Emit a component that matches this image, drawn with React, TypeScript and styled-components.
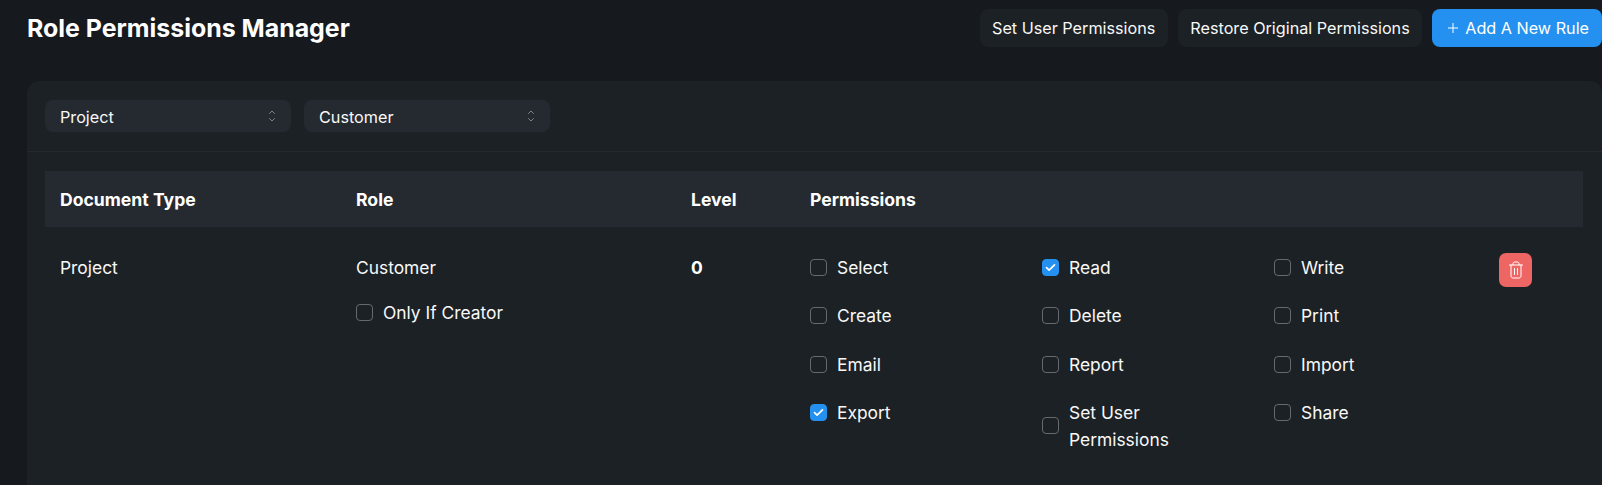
import React from 'react';
import styled, {createGlobalStyle} from 'styled-components';
import {Plus} from 'lucide-react';

const permissions = [
    {label: 'Select', checked: false},
    {label: 'Read', checked: true},
    {label: 'Write', checked: false},
    {label: 'Create', checked: false},
    {label: 'Delete', checked: false},
    {label: 'Print', checked: false},
    {label: 'Email', checked: false},
    {label: 'Report', checked: false},
    {label: 'Import', checked: false},
    {label: 'Export', checked: true},
    {label: 'Set User Permissions', checked: false},
    {label: 'Share', checked: false},
];

const Check = ({label, checked}: {label: string; checked?: boolean}) => (
    <CheckLabel>
        <Box $checked={checked}>
            {checked && (
                <svg width="11" height="9" viewBox="0 0 11 9" fill="none">
                    <path d="M1.5 4.6L4.1 7.2L9.5 1.8" stroke="#fff" strokeWidth="1.7" strokeLinecap="round" strokeLinejoin="round"/>
                </svg>
            )}
        </Box>
        <LabelText>{label}</LabelText>
    </CheckLabel>
);

const Select = ({value}: {value: string}) => (
    <SelectBox>
        <SelectValue>{value}</SelectValue>
        <svg width="8" height="14" viewBox="0 0 8 14" fill="none">
            <path d="M1.5 4.5L4 2L6.5 4.5M1.5 9.5L4 12L6.5 9.5" stroke="#7d828a" strokeWidth="1" strokeLinecap="round" strokeLinejoin="round"/>
        </svg>
    </SelectBox>
);

const TrashIcon = () => (
    <svg width="14" height="18" viewBox="0 0 14 18" fill="none" stroke="#fff" strokeWidth="1" strokeLinecap="round" strokeLinejoin="round">
        <path d="M0.5 4H13.5"/>
        <path d="M4 4V2.5C4 1.7 4.7 1 5.5 1H8.5C9.3 1 10 1.7 10 2.5V4"/>
        <path d="M2 4V15C2 16.1 2.9 17 4 17H10C11.1 17 12 16.1 12 15V4"/>
        <path d="M5.5 7.5V13.5M8.5 7.5V13.5"/>
    </svg>
);

export default function App() {
    return (
        <Page>
            <GlobalStyle/>
            <Header>
                <Title>Role Permissions Manager</Title>
                <Actions>
                    <Button>Set User Permissions</Button>
                    <Button>Restore Original Permissions</Button>
                    <PrimaryButton>
                        <Plus size={16} strokeWidth={1.5}/>
                        Add A New Rule
                    </PrimaryButton>
                </Actions>
            </Header>
            <Card>
                <Filters>
                    <Select value="Project"/>
                    <Select value="Customer"/>
                </Filters>
                <TableWrap>
                    <HeadRow>
                        <Cell>Document Type</Cell>
                        <Cell>Role</Cell>
                        <Cell>Level</Cell>
                        <PermCell>Permissions</PermCell>
                    </HeadRow>
                    <BodyRow>
                        <Cell>Project</Cell>
                        <Cell>
                            Customer
                            <CreatorRow>
                                <Check label="Only If Creator"/>
                            </CreatorRow>
                        </Cell>
                        <LevelCell>0</LevelCell>
                        <PermCell>
                            <PermGrid>
                                {permissions.map(p => (
                                    <Check key={p.label} label={p.label} checked={p.checked}/>
                                ))}
                            </PermGrid>
                        </PermCell>
                        <DeleteButton>
                            <TrashIcon/>
                        </DeleteButton>
                    </BodyRow>
                </TableWrap>
            </Card>
        </Page>
    );
}

const GlobalStyle = createGlobalStyle`
  html, body {
    margin: 0;
    height: 100%;
    overflow: hidden;
    background: #16191e;
  }
`

const Page = styled.div`
  height: 485px;
  overflow: hidden;
  padding: 9px 0 0 27px;
  box-sizing: border-box;
  font-family: Inter, "Noto Sans", sans-serif;
  font-size: 17.4px;
  line-height: 27px;
  color: #f8f8f8;
`

const Header = styled.div`
  display: flex;
  justify-content: space-between;
  align-items: flex-start;
  margin-bottom: 34px;
`

const Title = styled.h1`
  margin: 0;
  font-size: 24.9px;
  line-height: 38px;
  font-weight: 700;
  color: #fff;
`

const Actions = styled.div`
  display: flex;
  gap: 10px;
`

const Button = styled.button`
  height: 38px;
  padding: 0 12.5px;
  border: 0;
  border-radius: 8px;
  background: #1c2125;
  color: #f8f8f8;
  font: 400 16.2px Inter, sans-serif;
`

const PrimaryButton = styled(Button)`
  display: flex;
  align-items: center;
  gap: 4px;
  background: #2490ef;
  color: #fff;
  padding: 0 13px;
`

const Card = styled.div`
  height: 420px;
  border-radius: 12px 12px 0 0;
  background: #1c2125;
`

const Filters = styled.div`
  display: flex;
  gap: 13px;
  padding: 19px 18px;
  border-bottom: 1px solid #262a30;
  font-size: 16.2px;
`

const SelectBox = styled.div`
  display: flex;
  justify-content: space-between;
  align-items: center;
  box-sizing: border-box;
  width: 246px;
  height: 32px;
  padding: 0 15px;
  border-radius: 8px;
  background: #252a31;
`

const SelectValue = styled.span`
  padding-top: 2px;
`

const TableWrap = styled.div`
  margin: 19px 19px 0 18px;
`

const HeadRow = styled.div`
  display: grid;
  grid-template-columns: 296px 335px 118px 1fr;
  align-items: center;
  height: 56px;
  background: #252a31;
  font-size: 17.6px;
  font-weight: 700;
  color: #fff;
`

const BodyRow = styled.div`
  display: grid;
  grid-template-columns: 296px 335px 118px 1fr 34px;
  align-items: start;
  padding: 27px 50px 0 0;
`

const Cell = styled.div`
  padding-left: 15px;
`

const LevelCell = styled(Cell)`
  font-weight: 700;
  color: #fff;
`

const PermCell = styled.div`
  padding-left: 16px;
`

const CreatorRow = styled.div`
  margin-top: 18px;
`

const PermGrid = styled.div`
  display: grid;
  grid-template-columns: 232px 232px 1fr;
  align-items: start;
  row-gap: 21.3px;
`

const CheckLabel = styled.label`
  display: flex;
  align-items: center;
  gap: 10px;
`

const Box = styled.span<{$checked?: boolean}>`
  display: flex;
  align-items: center;
  justify-content: center;
  flex: none;
  box-sizing: border-box;
  width: 17px;
  height: 17px;
  border-radius: 4px;
  border: 1px solid ${({$checked}) => ($checked ? '#2490ef' : '#666a70')};
  background: ${({$checked}) => ($checked ? '#2490ef' : 'transparent')};
`

const LabelText = styled.span`
  max-width: 130px;
`

const DeleteButton = styled.button`
  display: flex;
  align-items: center;
  justify-content: center;
  width: 33px;
  height: 34px;
  margin-top: -1px;
  padding: 0;
  border: 0;
  border-radius: 7px;
  background: #ed6663;
`
